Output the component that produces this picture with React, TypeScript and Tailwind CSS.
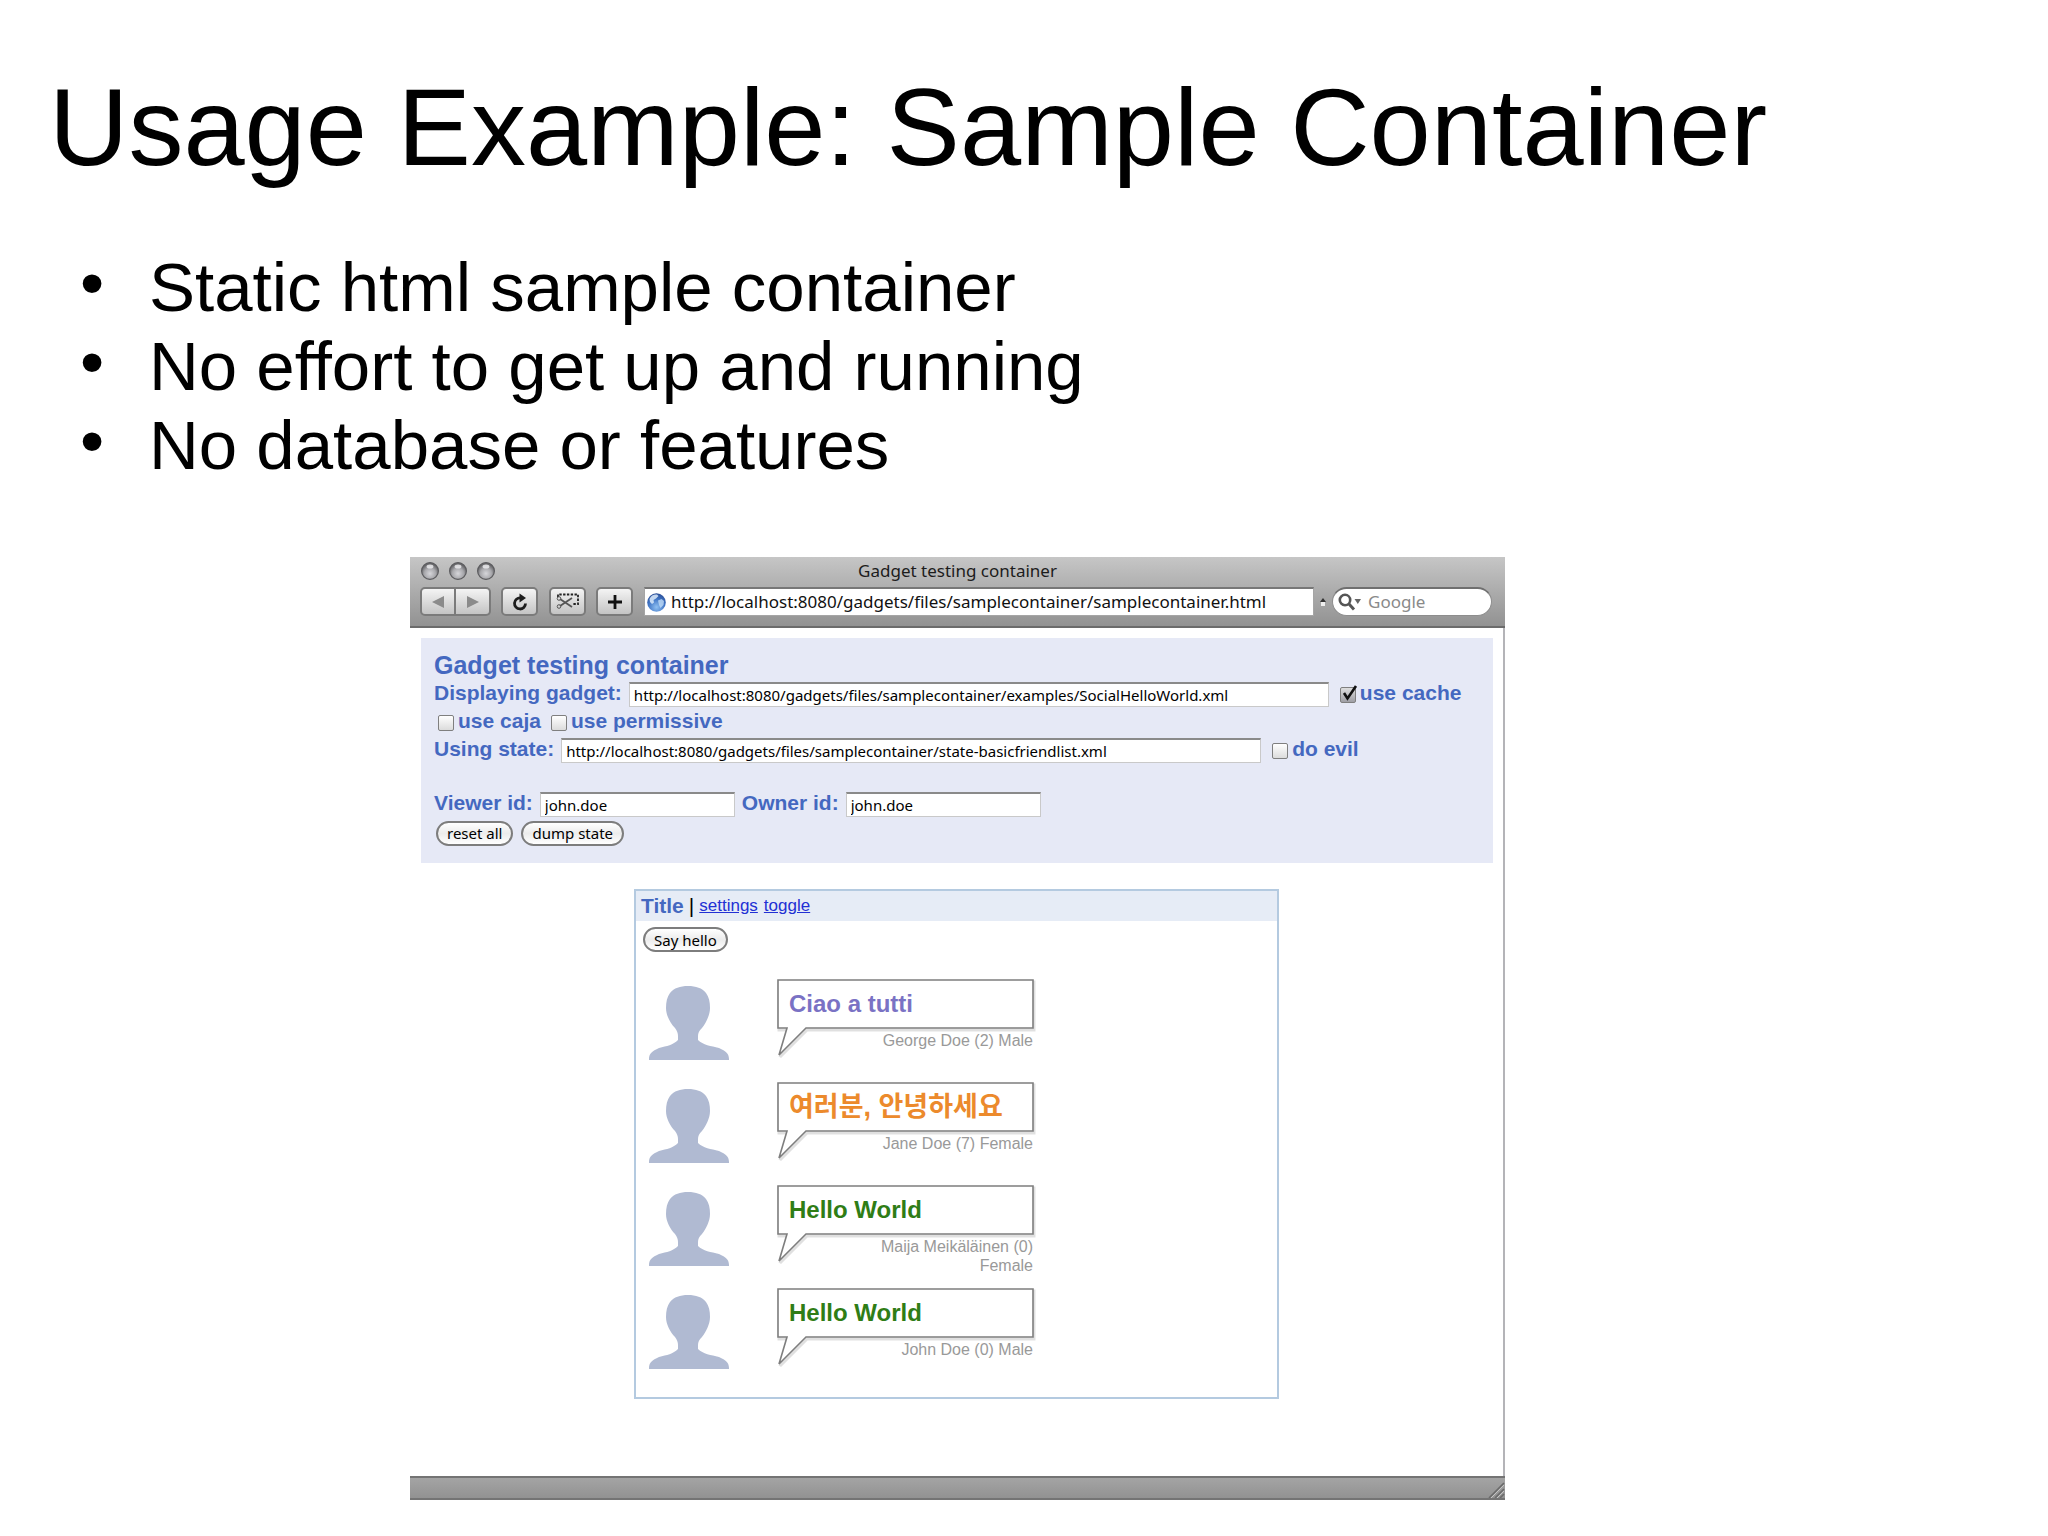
import React, { useState } from 'react';

type Friend = { name: string; greeting: string; color: string };

const friends: Friend[] = [
    { name: 'George Doe (2) Male', greeting: 'Ciao a tutti', color: 'text-[#7a72c4] text-[24px]' },
    { name: 'Jane Doe (7) Female', greeting: '여러분, 안녕하세요', color: 'text-[#ec8a2c] text-[27px]' },
    { name: 'Maija Meikäläinen (0) Female', greeting: 'Hello World', color: 'text-[#2f7d16] text-[24px]' },
    { name: 'John Doe (0) Male', greeting: 'Hello World', color: 'text-[#2f7d16] text-[24px]' },
];

const bullets = ['Static html sample container', 'No effort to get up and running', 'No database or features'];

const toolButton = 'flex h-[29px] items-center justify-center border-2 border-[#7b7b7b] bg-linear-to-b from-[#f4f4f4] to-[#c4c4c4]';

const TrafficLight: React.FC = () => (
    <svg width="18" height="18" viewBox="0 0 18 18" aria-hidden="true">
        <defs>
            <radialGradient id="light" cx="0.5" cy="0.65" r="0.55">
                <stop offset="0" stopColor="#d6d6da" />
                <stop offset="0.6" stopColor="#a9a9ad" />
                <stop offset="1" stopColor="#68686b" />
            </radialGradient>
        </defs>
        <circle cx="9" cy="9" r="8.4" fill="url(#light)" stroke="#5c5c5f" strokeWidth="1.2" />
        <ellipse cx="9" cy="4.6" rx="3.4" ry="2" fill="#f0f0f2" opacity="0.8" />
    </svg>
);

const Avatar: React.FC = () => (
    <svg width="80" height="74" viewBox="0 0 80 74" className="mt-[7px] shrink-0" aria-hidden="true">
        <path
            d="M39 0C47 0 53 2 57 7C60 11 61 16 61 22C61 29 57 37 53 42C50 45 49 47 49 50V54C54 59 62 60 70 62C77 65 80 68 80 73V74H0V73C0 68 3 65 10 62C18 60 24 59 29 54V50C29 47 28 45 26 42C21 37 17 29 17 22C17 16 18 11 21 7C25 2 31 0 39 0Z"
            fill="#b0bad2"
        />
    </svg>
);

const BubbleShape: React.FC = () => (
    <svg width="262" height="82" viewBox="0 0 262 82" className="absolute top-0 left-0" aria-hidden="true">
        <path d="M1 1H256V49H29L2 76L10 49H1Z" fill="none" stroke="#000" strokeOpacity="0.12" strokeWidth="3" transform="translate(1 2)" />
        <path d="M1 1H256V49H29L2 76L10 49H1Z" fill="#fff" stroke="#7e7e7e" strokeWidth="1.6" />
    </svg>
);

const FriendRow: React.FC<{ friend: Friend }> = ({ friend }) => (
    <li className="flex h-[103px] gap-12">
        <Avatar />
        <div className="relative w-[258px]">
            <BubbleShape />
            <p className={`relative flex h-[50px] items-center pl-3 font-bold ${friend.color}`}>{friend.greeting}</p>
            <p className="relative pt-[2px] pr-[2px] pl-[80px] text-right text-[16px] leading-[19px] text-[#999]">{friend.name}</p>
        </div>
    </li>
);

const TextField: React.FC<{ id: string; label: string; value: string; width: string }> = ({ id, label, value, width }) => (
    <>
        <label htmlFor={id} className="pb-[2px]">{label}</label>
        <input
            id={id}
            type="text"
            defaultValue={value}
            className={`h-[25px] border border-t-2 border-[#c9c9c9] border-t-[#8a8a8a] bg-white px-1 font-['Noto_Sans'] text-[15px] font-normal text-black ${width}`}
        />
    </>
);

const Check: React.FC<{ label: string; checked?: boolean }> = ({ label, checked = false }) => {
    const [on, setOn] = useState(checked);
    return (
        <label className="flex items-center gap-1 pb-[2px]">
            <span className="relative mt-1 size-[16px]">
                <input
                    type="checkbox"
                    checked={on}
                    onChange={(e) => setOn(e.target.checked)}
                    className="block size-[16px] appearance-none rounded-[2px] border border-[#7f7f7f] bg-linear-to-b from-white to-[#dcdcdc] checked:from-[#dedede] checked:to-[#9f9fa5]"
                />
                {on && (
                    <svg width="20" height="20" viewBox="0 0 20 20" className="pointer-events-none absolute -top-[3px] left-0" aria-hidden="true">
                        <path d="M4 9L7.5 14.5L16 2" fill="none" stroke="#111" strokeWidth="2.6" />
                    </svg>
                )}
            </span>
            {label}
        </label>
    );
};

const PillButton: React.FC<{ children: React.ReactNode }> = ({ children }) => (
    <button
        type="button"
        className="h-[25px] rounded-full border-2 border-[#7d7d7d] bg-linear-to-b from-white via-[#ececec] to-white px-[9px] font-['Noto_Sans'] text-[15px] leading-[20px] font-normal text-black"
    >
        {children}
    </button>
);

const Toolbar: React.FC = () => (
    <header className="h-[71px] border-b-2 border-[#6b6b6b] bg-linear-to-b from-[#c6c6c6] to-[#929292] font-['Noto_Sans']">
        <div className="relative flex h-[27px] items-center gap-[10px] pl-[11px]">
            <TrafficLight />
            <TrafficLight />
            <TrafficLight />
            <h2 className="absolute inset-x-0 text-center text-[17px] text-[#1c1c1c]">Gadget testing container</h2>
        </div>
        <div className="mt-[3px] flex items-center pr-[13px] pl-[10px]">
            <button type="button" aria-label="Back" className={`${toolButton} w-[36px] rounded-l-[5px]`}>
                <svg width="12" height="12" viewBox="0 0 12 12"><path d="M12 0V12L0 6Z" fill="#8b8b8b" /></svg>
            </button>
            <button type="button" aria-label="Forward" className={`${toolButton} w-[35px] rounded-r-[5px] border-l-0`}>
                <svg width="12" height="12" viewBox="0 0 12 12"><path d="M0 0V12L12 6Z" fill="#8b8b8b" /></svg>
            </button>
            <button type="button" aria-label="Reload" className={`${toolButton} ml-[10px] w-[37px] rounded-[5px]`}>
                <svg width="16" height="18" viewBox="0 0 16 18">
                    <path d="M13.5 10.5A5.5 5.5 0 1 1 8.5 5" fill="none" stroke="#1d1d1d" strokeWidth="2.8" />
                    <path d="M7.5 0.5L14 5L7.5 9.5Z" fill="#1d1d1d" />
                </svg>
            </button>
            <button type="button" aria-label="Web clip" className={`${toolButton} ml-[11px] w-[37px] rounded-[5px]`}>
                <svg width="24" height="17" viewBox="0 0 24 17" fill="none">
                    <path d="M2 4V1.5H22V11H16" stroke="#222" strokeWidth="1.8" strokeDasharray="2.4 1.4" />
                    <path d="M4 6L16 14M4 13L16 5" stroke="#555" strokeWidth="1.8" />
                    <circle cx="3" cy="5.5" r="1.8" stroke="#555" />
                    <circle cx="3" cy="13.5" r="1.8" stroke="#555" />
                </svg>
            </button>
            <button type="button" aria-label="Add bookmark" className={`${toolButton} ml-[10px] w-[37px] rounded-[5px]`}>
                <svg width="14" height="14" viewBox="0 0 14 14"><path d="M7 0V14M0 7H14" stroke="#111" strokeWidth="2.8" /></svg>
            </button>
            <div className="ml-[11px] flex h-[29px] flex-1 items-center gap-[5px] border border-t-2 border-[#a5a5a5] border-t-[#777] bg-white pl-[2px]">
                <svg width="19" height="19" viewBox="0 0 19 19" aria-hidden="true">
                    <defs>
                        <radialGradient id="sea" cx="0.5" cy="0.75" r="0.75">
                            <stop offset="0" stopColor="#8fc0f2" />
                            <stop offset="0.6" stopColor="#3f74c4" />
                            <stop offset="1" stopColor="#2a4c94" />
                        </radialGradient>
                    </defs>
                    <circle cx="9.5" cy="9.5" r="9.3" fill="url(#sea)" />
                    <path d="M2.5 6C4 2.5 7 1.2 10 1.6L11.5 3L9 5.5L6.5 7L7 9.5L5 11L3 9Z" fill="#dcebfa" opacity="0.85" />
                    <path d="M11 7.5L14.5 6L17 8L16.5 12L13.5 15L12 12Z" fill="#c0dcf6" opacity="0.8" />
                </svg>
                <input
                    aria-label="Address"
                    type="text"
                    defaultValue="http://localhost:8080/gadgets/files/samplecontainer/samplecontainer.html"
                    className="min-w-0 flex-1 bg-transparent text-[17px] text-[#111] outline-none"
                />
            </div>
            <svg width="6" height="8" viewBox="0 0 6 8" className="mx-[6px]" aria-hidden="true">
                <path d="M0 4L3 0L6 4Z" fill="#333" />
                <path d="M1 4H5V8H1Z" fill="#eee" />
            </svg>
            <label className="flex h-[29px] w-[160px] items-center gap-[6px] rounded-full border border-t-2 border-[#8d8d8d] border-t-[#6f6f6f] bg-white pl-[5px]">
                <svg width="24" height="18" viewBox="0 0 24 18" className="shrink-0" aria-hidden="true">
                    <circle cx="7" cy="7" r="5.2" fill="none" stroke="#555" strokeWidth="2.6" />
                    <path d="M11 11L16 16.5" stroke="#555" strokeWidth="3" />
                    <path d="M16.5 6H23L19.8 11Z" fill="#666" />
                </svg>
                <input aria-label="Search" type="text" placeholder="Google" className="w-full min-w-0 bg-transparent text-[17px] outline-none placeholder:text-[#8a8a8a]" />
            </label>
        </div>
    </header>
);

const App: React.FC = () => {
    return (
        <main className="min-h-screen bg-white font-['Liberation_Sans','Noto_Sans_CJK_KR',sans-serif] text-black">
            <h1 className="px-[49px] pt-[64px] text-[110px] leading-[126px]">Usage Example: Sample Container</h1>
            <ul className="mt-[58px] pl-[80px] text-[69px] leading-[79px]">
                {bullets.map((bullet) => (
                    <li key={bullet} className="flex">
                        <span className="w-[69px] leading-[70px]">•</span>
                        {bullet}
                    </li>
                ))}
            </ul>

            <section className="mt-[72px] ml-[410px] max-w-[1095px]">
                <Toolbar />
                <div className="border-r-2 border-[#b4b4b8] pt-[10px] pr-[10px] pb-[77px] pl-[11px]">
                    <form className="bg-[#e6e9f6] px-[13px] pt-[11px] pb-[16px] text-[21px] leading-[28px] font-bold text-[#4468c0]">
                        <h3 className="h-[31px] text-[25px] leading-[33px]">Gadget testing container</h3>
                        <div className="flex h-[28px] items-center gap-[7px]">
                            <TextField id="gadget" label="Displaying gadget:" value="http://localhost:8080/gadgets/files/samplecontainer/examples/SocialHelloWorld.xml" width="w-[700px] mr-1" />
                            <Check label="use cache" checked />
                        </div>
                        <div className="flex h-[28px] items-center gap-[10px] pl-1">
                            <Check label="use caja" />
                            <Check label="use permissive" />
                        </div>
                        <div className="flex h-[28px] items-center gap-[7px]">
                            <TextField id="state" label="Using state:" value="http://localhost:8080/gadgets/files/samplecontainer/state-basicfriendlist.xml" width="w-[700px] mr-1" />
                            <Check label="do evil" />
                        </div>
                        <div className="mt-[26px] flex h-[28px] items-center gap-[7px]">
                            <TextField id="viewer" label="Viewer id:" value="john.doe" width="w-[195px]" />
                            <TextField id="owner" label="Owner id:" value="john.doe" width="w-[195px]" />
                        </div>
                        <div className="mt-px flex h-[28px] items-center gap-2 pl-[2px]">
                            <PillButton>reset all</PillButton>
                            <PillButton>dump state</PillButton>
                        </div>
                    </form>

                    <article className="mt-[26px] ml-[213px] max-w-[645px] border-2 border-[#b4cae0] pb-[6px]">
                        <div className="flex h-[30px] items-center bg-[#e6ecf6] pb-px pl-[5px] text-[21px]">
                            <h4 className="font-bold text-[#4468c0]">Title</h4>
                            <span className="mx-[5px]">|</span>
                            <a href="#settings" className="mr-[6px] pt-px text-[17px] text-[#2230d4] underline">settings</a>
                            <a href="#toggle" className="pt-px text-[17px] text-[#2230d4] underline">toggle</a>
                        </div>
                        <div className="flex px-[7px] pt-[6px]">
                            <PillButton>Say hello</PillButton>
                        </div>
                        <ul className="mt-[27px] pl-[13px]">
                            {friends.map((friend) => (
                                <FriendRow key={friend.name} friend={friend} />
                            ))}
                        </ul>
                    </article>
                </div>
                <footer className="flex h-[24px] items-end justify-end border-y-2 border-[#747474] bg-linear-to-b from-[#a4a4a4] to-[#929292]">
                    <svg width="18" height="16" viewBox="0 0 18 16" aria-hidden="true">
                        <path d="M2 16L17 1M8 16L17 7M13 16L17 12" stroke="#6a6a6a" strokeWidth="1.6" />
                        <path d="M4 16L17 3M10 16L17 9" stroke="#c4c4c4" />
                    </svg>
                </footer>
            </section>
        </main>
    );
};

export default App;
